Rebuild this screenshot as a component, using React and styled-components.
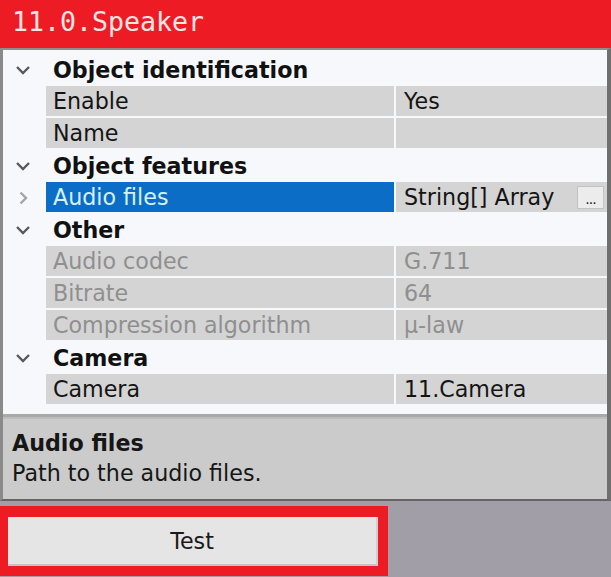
import React from 'react';
import styled, { createGlobalStyle } from 'styled-components';

const GlobalStyle = createGlobalStyle`
  html, body {
    margin: 0;
    padding: 0;
    background: #a29ea7;
  }
  body {
    font-family: "DejaVu Sans", Verdana, sans-serif;
  }
`;

const Window = styled.div`
  width: 611px;
  height: 577px;
  overflow: hidden;
`;

const TitleBar = styled.div`
  height: 48px;
  box-sizing: border-box;
  padding: 6px 12px 0;
  background: #ed1c24;
  color: #fbe6e6;
  font-family: "DejaVu Sans Mono", "Liberation Mono", monospace;
  font-size: 26.6px;
  line-height: 32px;
`;

const Panel = styled.div`
  border-top: 2px solid #8e8e8e;
  border-left: 3px solid #8a8a8a;
  border-right: 4px solid #6f6f6f;
  border-bottom: 2px solid #646464;
  background: #cbcbcb;
`;

const Grid = styled.div`
  background: #f6f8fb;
  padding: 4px 0 8px;
  border-bottom: 3px solid #a9a9a9;
`;

const Row = styled.div`
  display: grid;
  grid-template-columns: 43px 348px 2px 1fr;
  height: 32px;
`;

const Gutter = styled.div`
  display: flex;
  align-items: center;
  justify-content: center;
  padding-right: 4px;
`;

const CategoryLabel = styled.div`
  grid-column: 2 / 5;
  display: flex;
  align-items: center;
  padding-left: 7px;
  font-weight: bold;
  font-size: 22.2px;
  color: #111;
`;

const Cell = styled.div`
  display: flex;
  align-items: center;
  height: 30px;
  padding-left: 7px;
  font-size: 22.2px;
  white-space: nowrap;
  overflow: hidden;
  background: ${(p) => (p.$selected ? '#0b6dc5' : '#d4d4d4')};
  color: ${(p) => (p.$selected ? '#d4f1ff' : p.$disabled ? '#8f8f8f' : '#141414')};
`;

const Divider = styled.div`
  background: #f6f8fb;
`;

const ValueCell = styled(Cell)`
  justify-content: space-between;
  padding-left: 8px;
  padding-right: 3px;
`;

const EllipsisButton = styled.div`
  width: 27px;
  height: 23px;
  box-sizing: border-box;
  border: 1px solid #c2c2c2;
  background: #ececec;
  color: #222;
  font-size: 14px;
  line-height: 24px;
  text-align: center;
  letter-spacing: -1px;
`;

const Description = styled.div`
  height: 82px;
  box-sizing: border-box;
  padding: 10px 9px 0;
  color: #161616;
  border-top: 2px solid #bdbdbd;
`;

const DescTitle = styled.div`
  font-weight: bold;
  font-size: 22.2px;
  line-height: 28px;
`;

const DescText = styled.div`
  font-size: 22.2px;
  line-height: 32px;
`;

const Footer = styled.div`
  padding-top: 5px;
`;

const ButtonFrame = styled.div`
  width: 388px;
  box-sizing: border-box;
  padding: 11px 10px 10px 8px;
  background: #ed1c24;
`;

const TestButton = styled.div`
  height: 49px;
  box-sizing: border-box;
  background: #e5e5e5;
  border-right: 2px solid #d0d0d0;
  border-bottom: 2px solid #c4c4c4;
  display: flex;
  align-items: center;
  justify-content: center;
  font-size: 22.2px;
  color: #1a1a1a;
`;

const Chevron = ({ open }) =>
  open ? (
    <svg width="16" height="10" viewBox="0 0 16 10">
      <path d="M2 2 L8 8 L14 2" fill="none" stroke="#595959" strokeWidth="2.4" />
    </svg>
  ) : (
    <svg width="10" height="14" viewBox="0 0 10 14">
      <path d="M2.5 1.5 L8 7 L2.5 12.5" fill="none" stroke="#a3a3a3" strokeWidth="2.4" />
    </svg>
  );

const sections = [
  {
    title: 'Object identification',
    rows: [
      { name: 'Enable', value: 'Yes' },
      { name: 'Name', value: '' },
    ],
  },
  {
    title: 'Object features',
    rows: [{ name: 'Audio files', value: 'String[] Array', selected: true, expandable: true, button: true }],
  },
  {
    title: 'Other',
    rows: [
      { name: 'Audio codec', value: 'G.711', disabled: true },
      { name: 'Bitrate', value: '64', disabled: true },
      { name: 'Compression algorithm', value: 'μ-law', disabled: true },
    ],
  },
  {
    title: 'Camera',
    rows: [{ name: 'Camera', value: '11.Camera' }],
  },
];

export default function App() {
  return (
    <Window>
      <GlobalStyle />
      <TitleBar>11.0.Speaker</TitleBar>
      <Panel>
        <Grid>
          {sections.map((s) => (
            <React.Fragment key={s.title}>
              <Row>
                <Gutter>
                  <Chevron open />
                </Gutter>
                <CategoryLabel>{s.title}</CategoryLabel>
              </Row>
              {s.rows.map((r) => (
                <Row key={r.name}>
                  <Gutter>{r.expandable && <Chevron />}</Gutter>
                  <Cell $selected={r.selected} $disabled={r.disabled}>
                    {r.name}
                  </Cell>
                  <Divider />
                  <ValueCell $disabled={r.disabled}>
                    <span>{r.value}</span>
                    {r.button && <EllipsisButton>...</EllipsisButton>}
                  </ValueCell>
                </Row>
              ))}
            </React.Fragment>
          ))}
        </Grid>
        <Description>
          <DescTitle>Audio files</DescTitle>
          <DescText>Path to the audio files.</DescText>
        </Description>
      </Panel>
      <Footer>
        <ButtonFrame>
          <TestButton>Test</TestButton>
        </ButtonFrame>
      </Footer>
    </Window>
  );
}
